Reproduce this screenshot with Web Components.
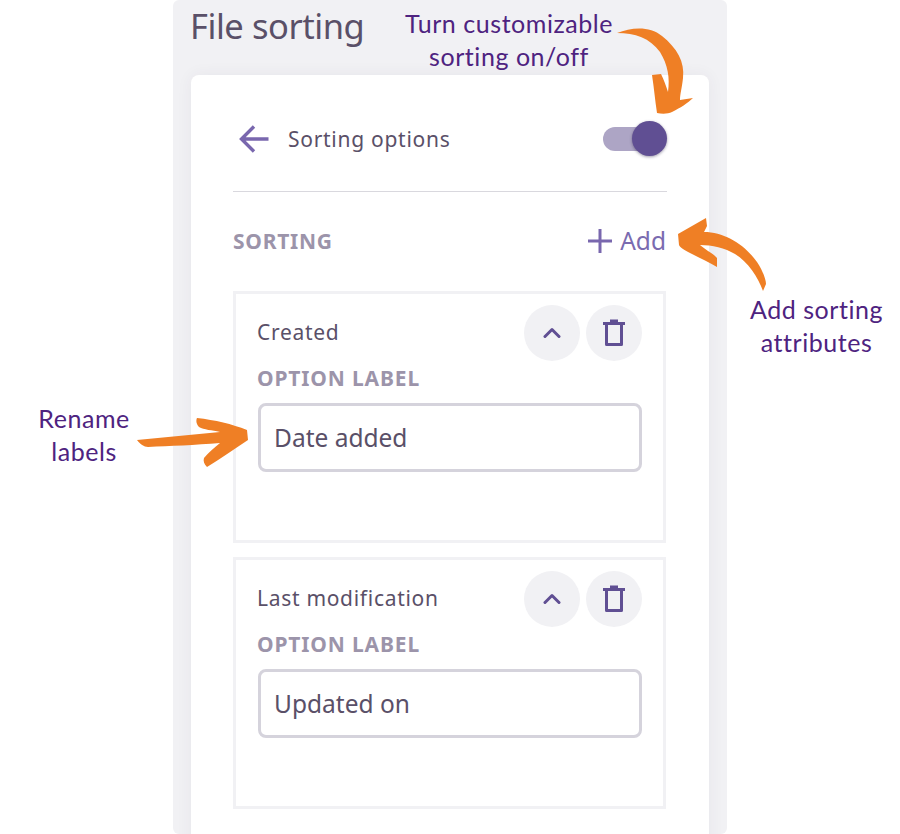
<!DOCTYPE html>
<html lang="en">
<head>
<meta charset="utf-8">
<title>File sorting</title>
<style>
  html, body { margin: 0; height: 834px; overflow: hidden; background: #fff; }
  body { position: relative; font-family: "Noto Sans", sans-serif; }
</style>
</head>
<body>
<settings-panel heading="File sorting">
  <options-header label="Sorting options"></options-header>
  <section-row label="SORTING"></section-row>
  <sort-item name="Created" value="Date added"></sort-item>
  <sort-item name="Last modification" value="Updated on"></sort-item>
</settings-panel>

<call-out style="left:405px;top:7px;width:208px">Turn customizable<br>sorting on/off</call-out>
<call-out style="left:716px;top:293px;width:201px">Add sorting<br>attributes</call-out>
<call-out style="left:14px;top:402px;width:140px">Rename<br>labels</call-out>
<arrow-overlay></arrow-overlay>

<script>
const PANEL_TEMPLATE = document.createElement('template');
PANEL_TEMPLATE.innerHTML = `
  <style>
    :host {
      display: block;
      box-sizing: border-box;
      width: 554px;
      height: 834px;
      margin-left: 173px;
      padding: 0 18px;
      overflow: hidden;
      background: #f1f1f4;
      border-radius: 6px;
    }
    h1 {
      height: 75px;
      margin: 0 0 0 -1px;
      padding-top: 4px;
      box-sizing: border-box;
      font: 400 34.5px/44px "Noto Sans", sans-serif;
      letter-spacing: -0.45px;
      color: #5a5068;
    }
    .card {
      height: 780px;
      box-sizing: border-box;
      padding: 12px 42px 0 42px;
      background: #fff;
      border-radius: 8px;
      box-shadow: 0 0 16px rgba(60, 50, 90, 0.06);
    }
  </style>
  <h1></h1>
  <div class="card"><slot></slot></div>
`;

class SettingsPanel extends HTMLElement {
  constructor() {
    super();
    this.attachShadow({ mode: 'open' });
    this.shadowRoot.appendChild(PANEL_TEMPLATE.content.cloneNode(true));
    this.shadowRoot.querySelector('h1').textContent = this.getAttribute('heading');
  }
}

const HEADER_TEMPLATE = document.createElement('template');
HEADER_TEMPLATE.innerHTML = `
  <style>
    :host {
      display: flex;
      align-items: center;
      height: 104px;
      border-bottom: 1px solid #d9d8de;
    }
    svg { display: block; margin: 0 19px 0 6px; }
    span {
      flex: 1;
      font-size: 21px;
      letter-spacing: 0.72px;
      color: #5a5068;
    }
    .toggle {
      position: relative;
      width: 58px;
      height: 24px;
      margin-right: 6px;
      background: #ada5c5;
      border-radius: 12px;
    }
    .knob {
      position: absolute;
      top: -6px;
      right: -6px;
      width: 35px;
      height: 35px;
      background: #604f93;
      border-radius: 50%;
      box-shadow: 0 1px 3px rgba(40, 30, 70, 0.45);
    }
  </style>
  <svg width="30" height="28" viewBox="0 0 30 28" fill="none" stroke="#7967ae" stroke-width="3.4">
    <path d="M29.5 14H2.5M15 1.5L2.5 14L15 26.5"/>
  </svg>
  <span></span>
  <div class="toggle"><div class="knob"></div></div>
`;

class OptionsHeader extends HTMLElement {
  constructor() {
    super();
    this.attachShadow({ mode: 'open' });
    this.shadowRoot.appendChild(HEADER_TEMPLATE.content.cloneNode(true));
    this.shadowRoot.querySelector('span').textContent = this.getAttribute('label');
  }
}

const SECTION_TEMPLATE = document.createElement('template');
SECTION_TEMPLATE.innerHTML = `
  <style>
    :host {
      display: flex;
      box-sizing: border-box;
      align-items: center;
      justify-content: space-between;
      height: 99px;
      padding-bottom: 2px;
      margin-right: 1px;
    }
    .title {
      font-size: 21px;
      font-weight: 700;
      letter-spacing: 0.75px;
      color: #9c94aa;
    }
    .add {
      display: flex;
      align-items: center;
      gap: 7px;
      font-size: 24.5px;
      color: #7a6bb0;
    }
    svg { display: block; }
  </style>
  <span class="title"></span>
  <span class="add">
    <svg width="26" height="26" viewBox="0 0 26 26" stroke="#7967ae" stroke-width="3"><path d="M13 1v24M1 13h24"/></svg>
    Add
  </span>
`;

class SectionRow extends HTMLElement {
  constructor() {
    super();
    this.attachShadow({ mode: 'open' });
    this.shadowRoot.appendChild(SECTION_TEMPLATE.content.cloneNode(true));
    this.shadowRoot.querySelector('.title').textContent = this.getAttribute('label');
  }
}

const ITEM_TEMPLATE = document.createElement('template');
ITEM_TEMPLATE.innerHTML = `
  <style>
    :host {
      display: block;
      box-sizing: border-box;
      height: 252px;
      margin: 0 1px 14px 0;
      padding: 11px 21px 0 22px;
      border: 3px solid #f1f1f4;
    }
    .top {
      display: flex;
      align-items: center;
      gap: 6px;
      height: 56px;
    }
    .name {
      flex: 1;
      margin-left: -1px;
      padding-bottom: 2px;
      font-size: 21px;
      letter-spacing: 0.7px;
      color: #5a5068;
    }
    .btn {
      display: flex;
      align-items: center;
      justify-content: center;
      width: 56px;
      height: 56px;
      background: #f1f1f4;
      border-radius: 50%;
    }
    svg { display: block; }
    label {
      display: block;
      height: 42px;
      margin-left: -1px;
      font-size: 21px;
      line-height: 35px;
      font-weight: 700;
      letter-spacing: 0.85px;
      color: #9c94aa;
    }
    .field {
      box-sizing: border-box;
      height: 69px;
      padding-left: 13px;
      border: 3px solid #d5d3dc;
      border-radius: 8px;
      font-size: 24.5px;
      line-height: 63px;
      color: #5a5068;
    }
  </style>
  <div class="top">
    <span class="name"></span>
    <div class="btn">
      <svg width="18" height="12" viewBox="0 0 18 12" fill="none" stroke="#604f93" stroke-width="3" stroke-linecap="round" stroke-linejoin="round"><path d="M2 9.5l7-7 7 7"/></svg>
    </div>
    <div class="btn">
      <svg width="22" height="28" viewBox="0 0 22 28" fill="none" stroke="#604f93" stroke-width="3" stroke-linejoin="round"><path d="M0 4.5h22M7 2h8"/><path d="M3.5 5v20.5h15V5"/></svg>
    </div>
  </div>
  <label>OPTION LABEL</label>
  <div class="field"></div>
`;

class SortItem extends HTMLElement {
  constructor() {
    super();
    this.attachShadow({ mode: 'open' });
    this.shadowRoot.appendChild(ITEM_TEMPLATE.content.cloneNode(true));
    this.shadowRoot.querySelector('.name').textContent = this.getAttribute('name');
    this.shadowRoot.querySelector('.field').textContent = this.getAttribute('value');
  }
}

const CALLOUT_TEMPLATE = document.createElement('template');
CALLOUT_TEMPLATE.innerHTML = `
  <style>
    :host {
      display: block;
      position: absolute;
      text-align: center;
      white-space: nowrap;
      font: 400 25px/32.5px Lato, sans-serif;
      letter-spacing: 0.55px;
      color: #4e2380;
    }
  </style>
  <slot></slot>
`;

class CallOut extends HTMLElement {
  constructor() {
    super();
    this.attachShadow({ mode: 'open' });
    this.shadowRoot.appendChild(CALLOUT_TEMPLATE.content.cloneNode(true));
  }
}

const ARROWS_TEMPLATE = document.createElement('template');
ARROWS_TEMPLATE.innerHTML = `
  <style>
    :host { position: absolute; left: 0; top: 0; display: block; pointer-events: none; }
    svg { display: block; }
  </style>
  <svg width="900" height="834" viewBox="0 0 900 834" fill="#ef7f25">
    <path d="M617 33C632 27 650 26 662 36C677 48 685 62 683 78C682 88 680 94 680 100L693 98C688 103 680 108 672 112C668 114 662 114 657 113C655 100 654 88 652 75L661 74C664 80 666 86 668 92C670 78 668 65 660 52C650 38 635 33 617 33Z"/>
    <path d="M678 234L706 218L707 226L704 232C725 232 745 245 757 262C763 271 766 280 766 284L763 291C758 277 748 262 735 254C725 248 712 245 700 245C706 250 715 255 717 258L717 267C710 263 700 258 690 253C685 250 680 248 679 245Z"/>
    <path d="M137 440L220 432C212 430 204 430 199 427C196 424 196 420 197 418C215 420 232 424 247 430L248 440C234 449 220 459 207 467C204 464 203 461 204 458C208 453 214 448 220 443C195 445 170 446 148 447C144 447 140 444 137 440Z"/>
  </svg>
`;

class ArrowOverlay extends HTMLElement {
  constructor() {
    super();
    this.attachShadow({ mode: 'open' });
    this.shadowRoot.appendChild(ARROWS_TEMPLATE.content.cloneNode(true));
  }
}

window.customElements.define('settings-panel', SettingsPanel);
window.customElements.define('options-header', OptionsHeader);
window.customElements.define('section-row', SectionRow);
window.customElements.define('sort-item', SortItem);
window.customElements.define('call-out', CallOut);
window.customElements.define('arrow-overlay', ArrowOverlay);
</script>
</body>
</html>
